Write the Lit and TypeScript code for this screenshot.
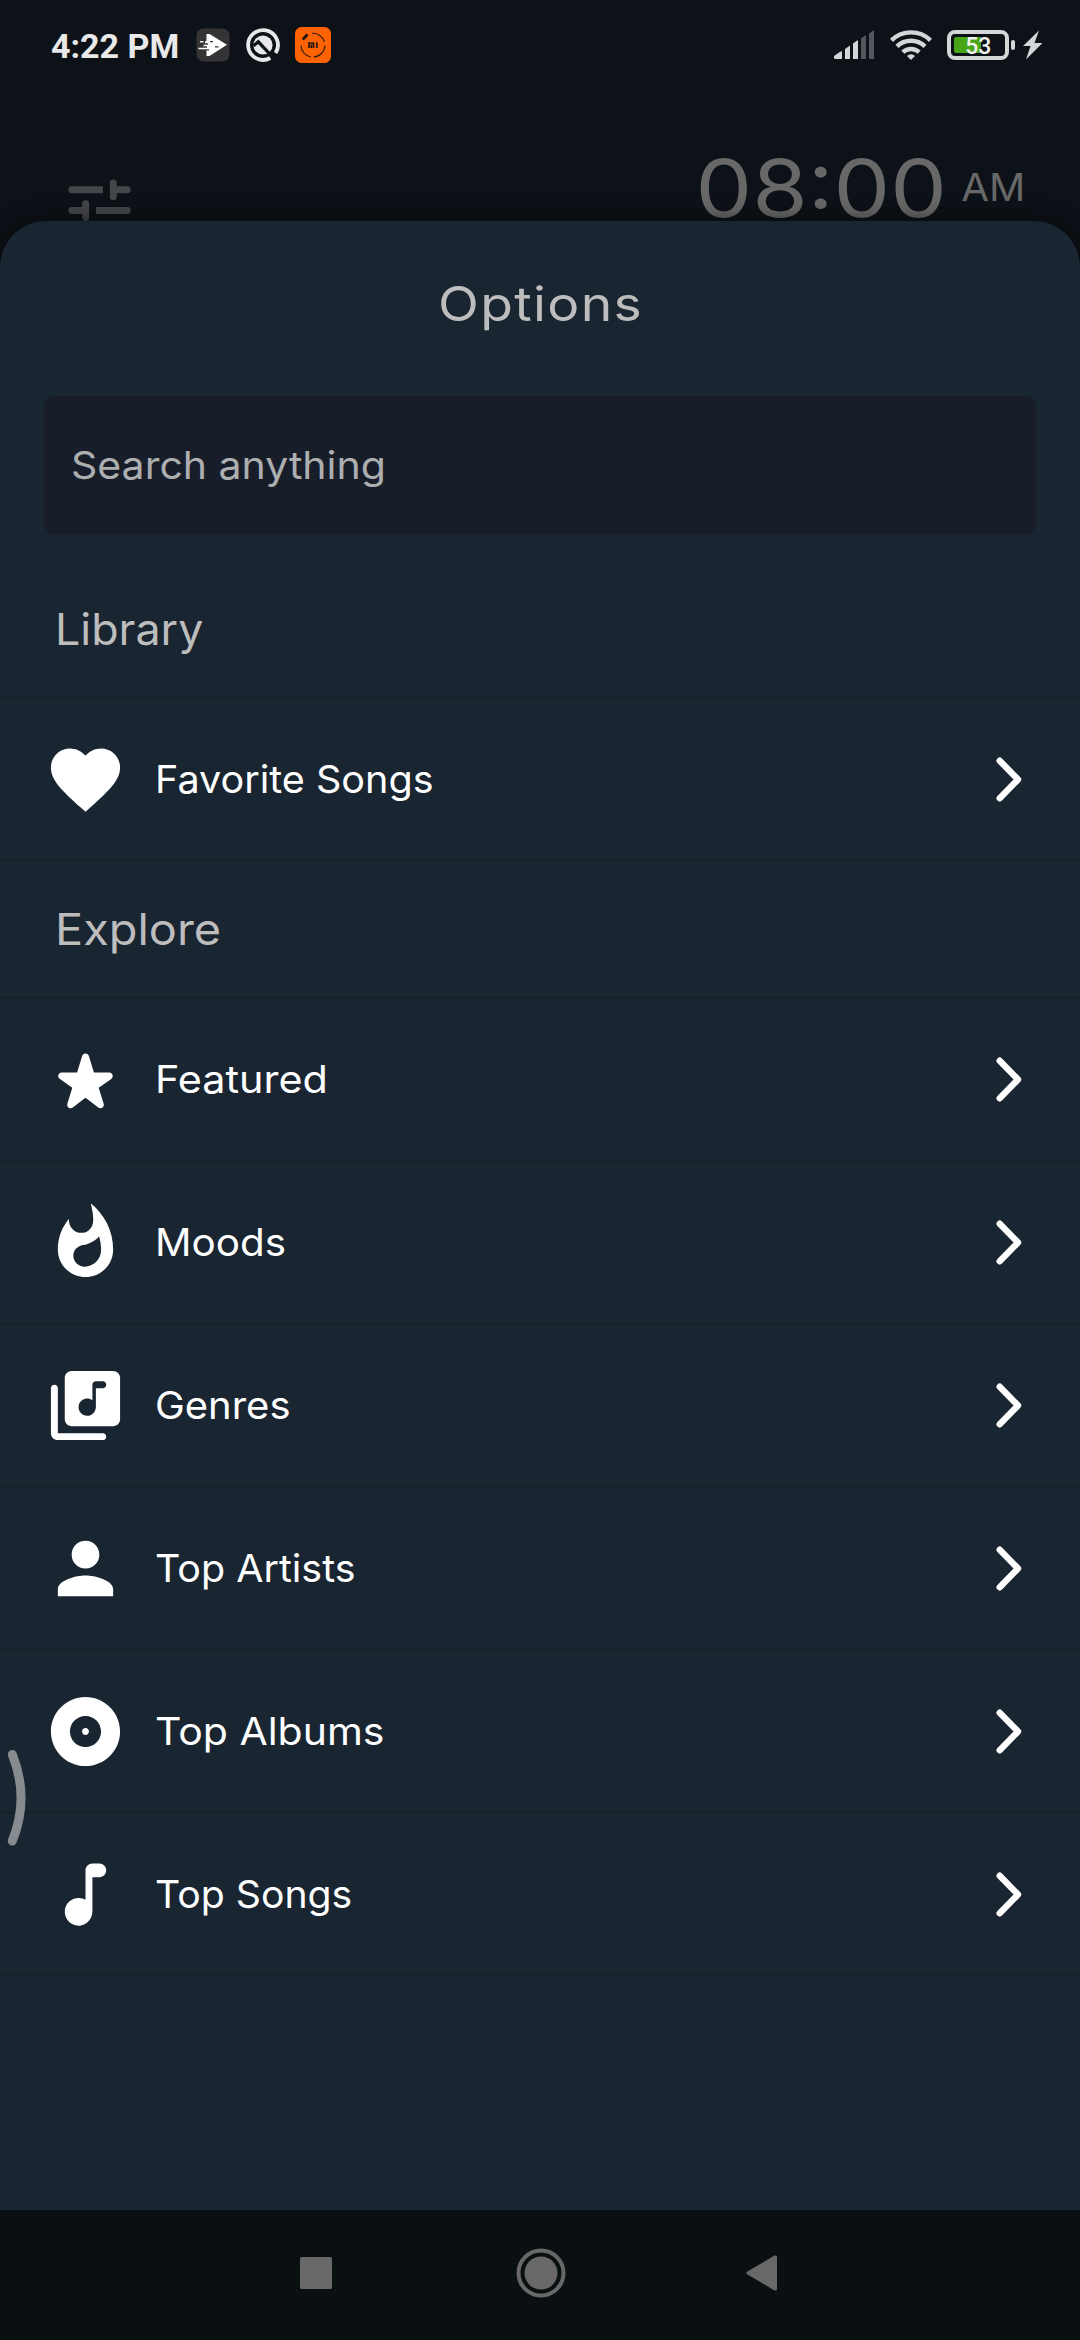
import { LitElement, html, css, svg, type SVGTemplateResult } from 'lit';
import { customElement, property } from 'lit/decorators.js';

interface Item {
  label: string;
  icon: string;
  stretch: number;
}

const ICONS: Record<string, SVGTemplateResult> = {
  heart: svg`<path d="M12 21.35l-1.45-1.32C5.4 15.36 2 12.28 2 8.5 2 5.42 4.42 3 7.5 3c1.74 0 3.41.81 4.5 2.09C13.09 3.81 14.76 3 16.5 3 19.58 3 22 5.42 22 8.5c0 3.78-3.4 6.86-8.55 11.54L12 21.35z"/>`,
  star: svg`<path d="M14.43 10l-1.47-4.84c-.29-.95-1.63-.95-1.91 0L9.57 10H5.12c-.97 0-1.37 1.25-.58 1.81l3.64 2.6-1.43 4.61c-.29.93.79 1.68 1.56 1.09L12 17.31l3.69 2.81c.77.59 1.85-.16 1.56-1.09l-1.43-4.61 3.64-2.6c.79-.57.39-1.81-.58-1.81h-4.45z"/>`,
  flame: svg`<path d="M13.5.67s.74 2.65.74 4.8c0 2.06-1.35 3.73-3.41 3.73-2.07 0-3.63-1.67-3.63-3.73l.03-.36C5.21 7.51 4 10.62 4 14c0 4.42 3.58 8 8 8s8-3.58 8-8C20 8.61 17.41 3.8 13.5.67zM11.71 19c-1.78 0-3.22-1.4-3.22-3.14 0-1.62 1.05-2.76 2.81-3.12 1.77-.36 3.6-1.21 4.62-2.58.39 1.29.59 2.65.59 4.04 0 2.65-2.15 4.8-4.8 4.8z"/>`,
  library: svg`<path d="M20 2H8c-1.1 0-2 .9-2 2v12c0 1.1.9 2 2 2h12c1.1 0 2-.9 2-2V4c0-1.1-.9-2-2-2zm-3 5h-2v5.37c0 1.27-.9 2.44-2.16 2.6-1.69.23-3.11-1.25-2.8-2.95.2-1.1 1.18-1.95 2.3-2.02.63-.04 1.2.16 1.66.51V6c0-.55.45-1 1-1h2c.55 0 1 .45 1 1s-.45 1-1 1zM3 6c-.55 0-1 .45-1 1v13c0 1.1.9 2 2 2h13c.55 0 1-.45 1-1s-.45-1-1-1H4V7c0-.55-.45-1-1-1z"/>`,
  person: svg`<path d="M12 12c2.21 0 4-1.79 4-4s-1.79-4-4-4-4 1.79-4 4 1.79 4 4 4zm0 2c-2.67 0-8 1.34-8 4v2h16v-2c0-2.66-5.33-4-8-4z"/>`,
  album: svg`<path d="M12 2C6.48 2 2 6.48 2 12s4.48 10 10 10 10-4.48 10-10S17.52 2 12 2zm0 14.5c-2.49 0-4.5-2.01-4.5-4.5S9.51 7.5 12 7.5s4.5 2.01 4.5 4.5-2.01 4.5-4.5 4.5zm0-5.5c-.55 0-1 .45-1 1s.45 1 1 1 1-.45 1-1-.45-1-1-1z"/>`,
  note: svg`<path d="M12 5v8.55c-.94-.54-2.1-.75-3.33-.32-1.34.48-2.37 1.67-2.61 3.07-.46 2.74 1.86 5.08 4.59 4.65 1.96-.31 3.35-2.11 3.35-4.1V7h2c1.1 0 2-.9 2-2s-.9-2-2-2h-2c-1.1 0-2 .9-2 2z"/>`,
};

const LIBRARY: Item[] = [{ label: 'Favorite Songs', icon: 'heart', stretch: 1.027 }];

const EXPLORE: Item[] = [
  { label: 'Featured', icon: 'star', stretch: 1.075 },
  { label: 'Moods', icon: 'flame', stretch: 1.05 },
  { label: 'Genres', icon: 'library', stretch: 1.038 },
  { label: 'Top Artists', icon: 'person', stretch: 1.024 },
  { label: 'Top Albums', icon: 'album', stretch: 1.064 },
  { label: 'Top Songs', icon: 'note', stretch: 1.018 },
];

@customElement('status-bar')
class StatusBar extends LitElement {
  static styles = css`
    :host { display: block; }
    .bar { display: flex; align-items: center; height: 90px; padding: 0 36px 0 51px; box-sizing: border-box; }
    .time { font: 700 34px/40px Roboto, sans-serif; color: #e9e9e9; padding-top: 2px; width: 145px; white-space: nowrap; }
    .apps { display: flex; align-items: center; flex: 1; }
    .q { margin-left: 16px; }
    .mi { margin-left: 15px; }
    svg { display: block; }
    .signal { margin-right: 16px; }
    .wifi { margin-right: 15px; }
    .level { font: 500 23px Roboto, sans-serif; fill: #f2f2f2; }
  `;
  render() {
    return html`
      <div class="bar">
        <div class="time">4:22 PM</div>
        <div class="apps">
          <svg class="play" width="34" height="34" viewBox="0 0 34 34">
            <rect x=".5" y=".5" width="33" height="33" rx="7" fill="#343436"/>
            <path d="M10.500 6h3L31 16.800L13.500 28h-3v-5.500h2.500V21.300H2.500v-1.500H11v-1.500H7.500v-1.500H12v-1.500H9v-2h1.500z" fill="#fff"/>
            <path d="M4 13.700h3.500" stroke="#fff" stroke-width="1.400"/>
            <path d="M14 13.700h3M19 18.800h3.500" stroke="#343436" stroke-width="1.200"/>
          </svg>
          <svg class="q" width="34" height="34" viewBox="0 0 34 34">
            <path d="M24.300 30A14.900 14.900 0 1 1 29.600 25" fill="none" stroke="#e6e8ea" stroke-width="3.800"/>
            <circle cx="17" cy="17" r="9.600" fill="#e6e8ea"/>
            <path d="M7.500 17.800L12.300 13.800L28 30.500" fill="none" stroke="#0d1218" stroke-width="3.200"/>
          </svg>
          <svg class="mi" width="36" height="36" viewBox="0 0 36 36">
            <rect width="36" height="36" rx="6.500" fill="#ff6200"/>
            <path d="M17 6.300A12 12 0 0 1 29.500 15M30 18.500A12 12 0 0 1 18.500 30M16 30A12 12 0 0 1 6 18.500" fill="none" stroke="#38200f" stroke-width="1.200"/>
            <path d="M8.500 11.800L11.800 8.300" stroke="#241a14" stroke-width="2.800" stroke-linecap="round"/>
            <path d="M14 21v-5h4.500v5M16.300 17.500V21M21.800 15.200V21" fill="none" stroke="#241a14" stroke-width="1.700"/>
          </svg>
        </div>
        <svg class="signal" width="40" height="30" viewBox="0 0 40 30">
          <g fill="#d4d5d6">
            <path d="M0 28v-2l5.500-3.800L8 21v8H1z"/>
            <path d="M11 29V19l5-3.500V29z"/>
            <path d="M19 29V13.500L24 10v19z"/>
          </g>
          <g fill="#53575b">
            <path d="M27 29V8.500L32 5v24z"/>
            <path d="M35 29V3.500L40 0v29z"/>
          </g>
        </svg>
        <svg class="wifi" width="42" height="30" viewBox="0 0 42 30">
          <g fill="none" stroke="#d4d5d6" stroke-width="4.400">
            <path d="M1.500 10.300A28 28 0 0 1 40.500 10.300"/>
            <path d="M7 16.400A20 20 0 0 1 35 16.400"/>
            <path d="M12.800 22.200A12 12 0 0 1 29.200 22.200"/>
          </g>
          <path d="M17 26a5.500 5.500 0 0 1 8 0l-4 4z" fill="#d4d5d6"/>
        </svg>
        <svg class="battery" width="97" height="30" viewBox="0 0 97 30">
          <rect x="2" y="2" width="58" height="26" rx="6" fill="none" stroke="#d4d5d6" stroke-width="4"/>
          <path d="M9.500 7H34v16H9.500a2.500 2.500 0 0 1-2.500-2.500v-11A2.500 2.500 0 0 1 9.500 7z" fill="#47a516"/>
          <rect x="64" y="10" width="4" height="10" rx="2" fill="#d4d5d6"/>
          <text class="level" x="18.300" y="24">53</text>
          <path d="M92 .5L76 16h7.500L79 29.500 95.500 13H87.500z" fill="#d4d5d6"/>
        </svg>
      </div>
    `;
  }
}

@customElement('option-row')
class OptionRow extends LitElement {
  static styles = css`
    :host { display: block; }
    .row { display: flex; align-items: center; height: 160px; border-top: 3px solid #17212c; padding: 0 56px 0 44px; }
    .icon { width: 83px; height: 83px; fill: #fff; margin-right: 27.5px; flex: none; }
    .label { flex: none; margin-right: auto; font-size: 38.5px; color: #fff; white-space: nowrap; transform-origin: left; }
    .chevron { width: 28px; height: 45px; fill: none; stroke: #fff; stroke-width: 6.4; stroke-linecap: round; stroke-linejoin: round; }
  `;
  @property({ attribute: false }) item!: Item;
  render() {
    return html`
      <div class="row">
        <svg class="icon" viewBox="0 0 24 24">${ICONS[this.item.icon]}</svg>
        <span class="label" style="transform:scaleX(${this.item.stretch})">${this.item.label}</span>
        <svg class="chevron" viewBox="0 0 28 45"><path d="M3.700 3.700L22 22.500L3.700 41.300"/></svg>
      </div>
    `;
  }
}

@customElement('app-root')
class AppRoot extends LitElement {
  static styles = css`
    :host { display: block; }
    .screen { position: relative; display: flex; flex-direction: column; height: 2340px; overflow: hidden; background: #0d1218; font-family: Inter, "Open Sans", sans-serif; font-weight: 400; }
    .top { display: flex; align-items: flex-start; justify-content: space-between; height: 131px; padding: 0 55px 0 57.5px; flex: none; }
    .tune { width: 83px; height: 83px; margin-top: 78.5px; fill: #454648; flex: none; }
    .clock { display: flex; align-items: center; height: 96px; margin-top: 49px; gap: 12px; color: #686868; }
    .hours { font-size: 80px; transform: scaleX(1.123); transform-origin: right; }
    .half { font-size: 38.5px; padding-left: 5px; transform: scaleX(1.045); transform-origin: right; }
    .sheet { position: relative; flex: 1; background: #1a2532; border-radius: 46px 46px 0 0; box-shadow: 0 0 22px rgba(0, 0, 0, 0.6); }
    .title { display: flex; align-items: center; justify-content: center; height: 164px; margin: 0; padding-left: 1px; font-size: 48px; font-weight: 400; letter-spacing: 1.2px; color: #bdbdbd; transform: scaleX(1.113); }
    .search { display: flex; align-items: center; height: 138px; margin: 11px 44px 28px; padding-left: 27px; border-radius: 10px; background: #181e29; color: #acaeb0; font-size: 38.5px; }
    .section { display: flex; align-items: center; height: 134px; margin: 0; padding-left: 55px; font-size: 44px; font-weight: 400; color: #bdbdbd; }
    .explore { border-top: 3px solid #17212c; }
    .wide { display: block; transform-origin: left; transform: scaleX(1.065); }
    .library .wide { transform: scaleX(1.018); }
    .end { height: 3px; background: #17212c; }
    .nav { position: relative; display: flex; align-items: center; height: 130px; box-sizing: border-box; padding: 0 0 5px 300px; background: #0a0f12; flex: none; }
    .nav svg { display: block; fill: #686868; }
    .home { margin: 0 180px 0 184px; }
    .edge { position: absolute; left: 0; top: 1745px; width: 32px; height: 106px; fill: none; stroke: #868b8f; stroke-width: 9; stroke-linecap: round; }
  `;
  render() {
    return html`
      <div class="screen">
        <status-bar></status-bar>
        <div class="top">
          <svg class="tune" viewBox="0 0 24 24">
            <path d="M13 5v2H4a1 1 0 0 1 0-2zM16 3a1 1 0 0 1 1 1v1h3a1 1 0 0 1 0 2h-3v1a1 1 0 0 1-2 0V4a1 1 0 0 1 1-1zM8 9a1 1 0 0 1 1 1v4a1 1 0 0 1-2 0v-1H4a1 1 0 0 1 0-2h3v-1a1 1 0 0 1 1-1zM11 11h9a1 1 0 0 1 0 2h-9zM12 15a1 1 0 0 1 1 1v1h7a1 1 0 0 1 0 2h-7v1a1 1 0 0 1-2 0v-4a1 1 0 0 1 1-1z"/>
          </svg>
          <div class="clock"><span class="hours">08:00</span><span class="half">AM</span></div>
        </div>
        <main class="sheet">
          <h1 class="title">Options</h1>
          <div class="search"><span class="wide">Search anything</span></div>
          <h2 class="section library"><span class="wide">Library</span></h2>
          ${LIBRARY.map((i) => html`<option-row .item=${i}></option-row>`)}
          <h2 class="section explore"><span class="wide">Explore</span></h2>
          ${EXPLORE.map((i) => html`<option-row .item=${i}></option-row>`)}
          <div class="end"></div>
        </main>
        <nav class="nav">
          <svg width="32" height="32" viewBox="0 0 32 32"><rect width="32" height="32" rx="1.500"/></svg>
          <svg class="home" width="50" height="50" viewBox="0 0 50 50">
            <circle cx="25" cy="25" r="16.500"/>
            <circle cx="25" cy="25" r="22.500" fill="none" stroke="#686868" stroke-width="4"/>
          </svg>
          <svg width="32" height="36" viewBox="0 0 32 36"><path d="M1 16.800L28.500.6Q31 0 31 2V34Q31 36 28.500 35.400L1 19.200Q-.2 18 1 16.800z"/></svg>
        </nav>
        <svg class="edge" viewBox="0 0 32 106"><path d="M12.300 9.500Q29.800 53 12.300 96"/></svg>
      </div>
    `;
  }
}
